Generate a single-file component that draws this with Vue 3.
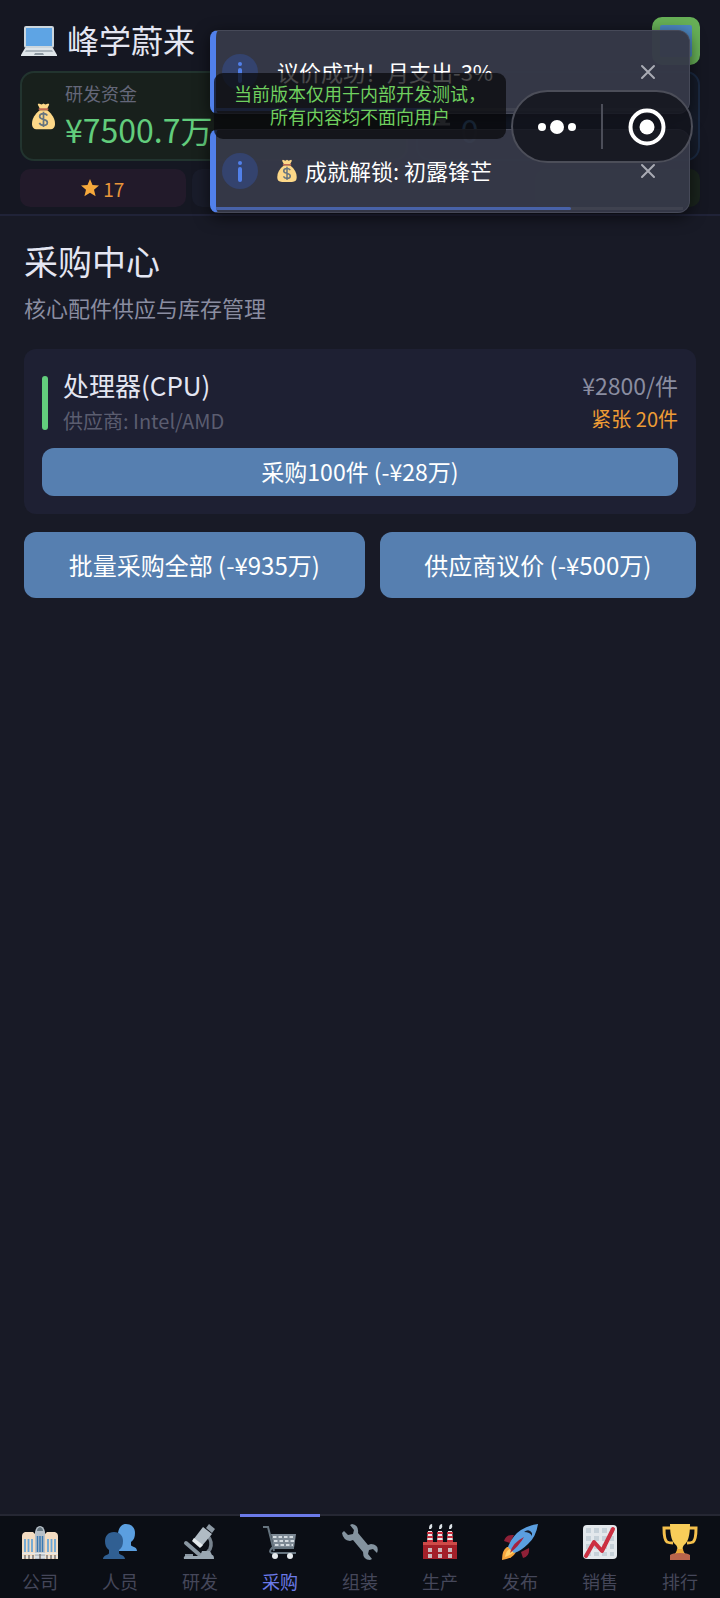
<template>
  <div class="game">
    <header class="header">
      <div class="brand">
        <svg class="brand-icon" viewBox="0 0 36 36" aria-hidden="true">
          <rect x="3" y="3" width="30" height="22" rx="2" fill="#ccd6dd" />
          <rect x="5" y="5" width="26" height="18" fill="#5ea4e4" />
          <path d="M4 25h28l4 7v1H0v-1z" fill="#dfe5e9" />
          <path d="M5 27h26l1 2H4z" fill="#aab4bc" />
          <path d="M14 30h8l1 2H13z" fill="#8b969f" />
        </svg>
        <span class="brand-name">峰学蔚来</span>
        <button class="avatar" type="button"></button>
      </div>

      <div class="resources">
        <div class="resource money">
          <svg class="resource-icon" viewBox="0 0 24 28" aria-hidden="true">
            <use href="#money-bag" />
          </svg>
          <div>
            <div class="resource-label">研发资金</div>
            <div class="resource-value">¥7500.7万</div>
          </div>
        </div>
        <div class="resource stock">
          <svg class="resource-icon" viewBox="0 0 24 28" aria-hidden="true">
            <path d="M13 4l7 3-5 7q5 3 3 7h5v3H1v-3h12l-6-5z" fill="#7e858c" />
          </svg>
          <div>
            <div class="resource-label"></div>
            <div class="resource-value">0</div>
          </div>
        </div>
      </div>

      <div class="chips">
        <div class="chip fame">
          <svg class="star" viewBox="0 0 18 18" aria-hidden="true">
            <path d="M9 0l2.500 6 6.500.500-5 4.300 1.600 6.500L9 13.800l-5.600 3.500L5 10.800 0 6.500 6.500 6z" fill="#f6a93b" />
          </svg>
          <span>17</span>
        </div>
        <div class="chip"></div>
        <div class="chip"></div>
        <div class="chip market"></div>
      </div>
    </header>

    <main class="content">
      <h1>采购中心</h1>
      <p class="subtitle">核心配件供应与库存管理</p>

      <section class="card">
        <div class="part">
          <span class="status"></span>
          <div class="part-info">
            <h2>处理器(CPU)</h2>
            <p>供应商: Intel/AMD</p>
          </div>
          <div class="part-price">
            <div class="price">¥2800/件</div>
            <div class="left">紧张 20件</div>
          </div>
        </div>
        <button class="btn buy" type="button">采购100件 (-¥28万)</button>
      </section>

      <div class="actions">
        <button class="btn" type="button">批量采购全部 (-¥935万)</button>
        <button class="btn" type="button">供应商议价 (-¥500万)</button>
      </div>
    </main>

    <nav class="tabs">
      <a
        v-for="tab in tabs"
        :key="tab.name"
        href="#"
        class="tab"
        :class="{ active: tab.name === current }"
        @click.prevent="current = tab.name"
      >
        <svg viewBox="0 0 36 36" aria-hidden="true" v-html="tab.icon"></svg>
        <span>{{ tab.name }}</span>
      </a>
    </nav>

    <div class="toasts">
      <div v-for="toast in toasts" :key="toast.text" class="toast">
        <svg class="info" viewBox="0 0 36 36" aria-hidden="true">
          <circle cx="18" cy="18" r="18" fill="#34436e" />
          <circle cx="18" cy="10" r="2" fill="#5180ea" />
          <path d="M18 16v11" stroke="#5180ea" stroke-width="4" stroke-linecap="round" />
        </svg>
        <div class="toast-text">
          <svg v-if="toast.bag" class="toast-bag" viewBox="0 0 24 28" aria-hidden="true">
            <use href="#money-bag" />
          </svg>
          <span>{{ toast.text }}</span>
        </div>
        <button class="close" type="button" aria-label="关闭" @click="dismiss(toast)">
          <svg viewBox="0 0 16 16" aria-hidden="true">
            <path d="M2 2l12 12M14 2L2 14" stroke="#a9abb4" stroke-width="2" stroke-linecap="round" />
          </svg>
        </button>
        <div class="track">
          <div class="progress" :style="{ width: toast.progress + '%' }"></div>
        </div>
      </div>
    </div>

    <div class="notice">当前版本仅用于内部开发测试，<br>所有内容均不面向用户</div>

    <div class="capsule">
      <button type="button" aria-label="更多">
        <svg width="40" height="40" viewBox="0 0 40 40" fill="#fff" aria-hidden="true">
          <circle cx="5" cy="20" r="4" />
          <circle cx="20" cy="20" r="7" />
          <circle cx="35" cy="20" r="4" />
        </svg>
      </button>
      <span class="divider"></span>
      <button type="button" aria-label="退出">
        <svg width="40" height="40" viewBox="0 0 40 40" aria-hidden="true">
          <circle cx="20" cy="20" r="16.500" fill="none" stroke="#fff" stroke-width="4" />
          <circle cx="20" cy="20" r="7.500" fill="#fff" />
        </svg>
      </button>
    </div>

    <svg class="defs" aria-hidden="true">
      <symbol id="money-bag" viewBox="0 0 24 28">
        <path d="M7 1l3 1 2-1 2 1 3-1 1 1-3 6H9L6 2z" fill="#fdd888" />
        <path d="M8 8c-5 4-8 9-8 14 0 4 2 6 6 6h12c4 0 6-2 6-6 0-5-3-10-8-14z" fill="#fdd888" />
        <path d="M7 6h10v2H7z" fill="#bf6952" />
        <path d="M16 13.500c-1-1.500-2.500-2-4-2-2 0-4 1-4 3s2 2.500 4 3 4 1.200 4 3.200-2 3-4 3-3.500-.700-4.300-2.500M12 9.500v16" fill="none" stroke="#67757f" stroke-width="1.800" />
      </symbol>
    </svg>
  </div>
</template>

<script setup>
import { ref } from 'vue';

const current = ref('采购');

const toasts = ref([
  { text: '议价成功！月支出-3%', progress: 46 },
  { text: '成就解锁: 初露锋芒', progress: 76, bag: true }
]);

function dismiss(toast) {
  toasts.value = toasts.value.filter(x => x !== toast);
}

const tabs = [
  {
    name: '公司',
    icon: `
      <path d="M0 12q0-3 3-4l8 0 2 2h10l2-2h8q3 1 3 4v23H0z" fill="#f3dcc2"/>
      <path d="M13 35V8q1-6 5-6t5 6v27z" fill="#b7c0c9"/>
      <path d="M15 7q0-3 3-4 3 1 3 4z" fill="#66757f"/>
      <path d="M3 15v13M6.500 15v13M10 15v13M26 15v13M29.500 15v13M33 15v13" stroke="#6ba6d6" stroke-width="1.800"/>
      <path d="M15.500 12v16M18 12v16M20.500 12v16" stroke="#3b78b0" stroke-width="1.500"/>
      <path d="M0 29.500h36M0 33h36" stroke="#e4e8ea" stroke-width="1.500"/>
      <path d="M3 31v4M7 31v4M11 31v4M18 30v5M25 31v4M29 31v4M33 31v4" stroke="#7d7672" stroke-width="1.500"/>`
  },
  {
    name: '人员',
    icon: `
      <path d="M24 0c6 0 9 4 9 9 0 4-1 7-4 9v3c0 2 6 1 6 6H17l-1-18c1-6 4-9 8-9z" fill="#5b9fe0"/>
      <path d="M12 8c6 0 9 4 9 9 0 4-1 7-4 9v3c0 2 6 2 6 6H1c0-4 6-4 6-6v-3c-3-2-4-5-4-9 0-5 3-9 9-9z" fill="#305f92"/>`
  },
  {
    name: '研发',
    icon: `
      <path d="M26 12q5 6 2 13l-4 5" fill="none" stroke="#77828d" stroke-width="3.500"/>
      <path d="M4 19l15 13" stroke="#8a97a2" stroke-width="4" stroke-linecap="round"/>
      <path d="M3 30h8v3H3z" fill="#8a97a2"/>
      <path d="M20 27h8l2 4q2 0 2 4H2q-1-3 2-3h14z" fill="#9aa7b2"/>
      <path d="M21 3l9 7-11 13-8-7z" fill="#b0bbc4"/>
      <path d="M12 14l9 7-3 3-8-7z" fill="#e5eaed"/>
      <path d="M27 0l6 5-3 4-6-5z" fill="#8d99a4"/>`
  },
  {
    name: '采购',
    icon: `
      <path d="M1 3h5l6 24" fill="none" stroke="#66747f" stroke-width="2"/>
      <path d="M9 10h25l-2 14H12z" fill="#7d8994"/>
      <path d="M11 13h21M12 17h20M13 21h18" stroke="#d5dce1" stroke-width="2" stroke-dasharray="3.500 2"/>
      <path d="M32 24H10q-4 4 0 5h24" fill="none" stroke="#66747f" stroke-width="2"/>
      <circle cx="13" cy="32" r="3" fill="#e6eaed"/>
      <circle cx="28" cy="32" r="3" fill="#e6eaed"/>`
  },
  {
    name: '组装',
    icon: `
      <path d="M10 0l-2 1 4 5-1 4-5 1-4-4-2 2q1 7 8 8l3-1 10 12q0 8 7 8l2-1-4-5 1-4 4-1 4 4q3-8-6-9l-3 1L16 9q1-8-6-9z" fill="#84939f"/>`
  },
  {
    name: '生产',
    icon: `
      <path d="M5 18L6 7h4l1 11zM15 18l1-11h4l1 11zM25 18l1-11h4l1 11z" fill="#f1e5e6"/>
      <path d="M5 9h6M5 13h6M5 17h6M15 9h6M15 13h6M15 17h6M25 9h6M25 13h6M25 17h6" stroke="#c62f3d" stroke-width="2"/>
      <path d="M7 5q0-5 3-5 1 3-1 5zM17 5q0-5 3-5 1 3-1 5zM27 5q0-5 3-5 1 3-1 5z" fill="#dce2e6"/>
      <path d="M1 18h34v17H1z" fill="#a32029"/>
      <path d="M1 18h34v3H1z" fill="#ce4b48"/>
      <path d="M6 24h4v4H6zM16 24h4v4h-4zM26 24h4v4h-4zM6 30h4v4H6zM16 30h4v4h-4zM26 30h4v4h-4z" fill="#cbb9bc"/>`
  },
  {
    name: '发布',
    icon: `
      <path d="M2 17q2-7 10-6l-4 8zM19 28l8-4q1 8-6 10z" fill="#8f2037"/>
      <path d="M0 36q0-10 5-13h6l3 4q-1 7-14 9z" fill="#f5a53c"/>
      <path d="M3 33q1-7 5-8l4 3q-3 3-9 5z" fill="#ffd06b"/>
      <path d="M36 0q-2 13-10 20-7 7-14 9l-6-6q3-8 9-14Q23 2 36 0z" fill="#5b9fe0"/>
      <path d="M22 8q5-4 8 1v3q-2-4-8-4z" fill="#171c27"/>
      <path d="M22 13q-5 9-14 16 2-10 14-16z" fill="#a5223f"/>`
  },
  {
    name: '销售',
    icon: `
      <rect x="1" y="1" width="34" height="34" rx="4" fill="#e3e8ec"/>
      <path d="M4 4h5v5H4zM12 4h5v5h-5zM20 4h5v5h-5zM28 4h4v5h-4zM4 12h5v5H4zM12 12h5v5h-5zM20 12h5v5h-5zM28 12h4v5h-4zM4 20h5v5H4zM12 20h5v5h-5zM20 20h5v5h-5zM28 20h4v5h-4zM4 28h5v4H4zM12 28h5v4h-5zM20 28h5v4h-5zM28 28h4v4h-4z" fill="#c6d1d9"/>
      <path d="M4 32l8-14 8 9L31 5" fill="none" stroke="#cc3042" stroke-width="4" stroke-linecap="round" stroke-linejoin="round"/>`
  },
  {
    name: '排行',
    icon: `
      <path d="M9 4H2q0 12 3 14 2 1 6 1M27 4h7q0 12-3 14-2 1-6 1" fill="none" stroke="#f5c04c" stroke-width="3"/>
      <path d="M8 0h20q0 17-6 21-2 2-1 6l3 4H12l3-4q1-4-1-6Q8 17 8 0z" fill="#f8cd59"/>
      <path d="M15 25h6l1 5h-8z" fill="#eda836"/>
      <path d="M8 31q2-2 10-2t10 2v5H8z" fill="#b9654c"/>`
  }
];
</script>

<style>
body {
  margin: 0;
  background: #181a26;
}
</style>

<style scoped>
.game {
  position: relative;
  display: flex;
  flex-direction: column;
  min-height: 100vh;
  color: #e4e6f2;
  font-family: "Noto Sans CJK SC", sans-serif;
}
.game * {
  box-sizing: border-box;
}
button {
  padding: 0;
  border: 0;
  background: none;
  color: inherit;
  font-family: inherit;
  cursor: pointer;
}
h1,
h2,
p {
  margin: 0;
  font-weight: normal;
}
svg {
  display: block;
  flex: none;
}
.defs {
  position: absolute;
  width: 0;
  height: 0;
}

.header {
  padding: 17px 20px 7px;
  background: #151722;
  border-bottom: 2px solid #202338;
}
.brand {
  display: flex;
  align-items: center;
  gap: 10px;
  height: 48px;
}
.brand-icon {
  width: 36px;
  height: 36px;
  margin-left: 1px;
}
.brand-name {
  flex: 1;
  padding-bottom: 3px;
  font-size: 32px;
  line-height: 45px;
}
.avatar {
  width: 48px;
  height: 48px;
  border: 8px solid #67b057;
  border-radius: 10px;
  background: #4c87c2;
}
.resources {
  display: flex;
  gap: 8px;
  margin-top: 6px;
}
.resource {
  display: flex;
  flex: 1 1 auto;
  align-items: center;
  gap: 10px;
  height: 90px;
  padding: 0 10px;
  border: 2px solid #22342f;
  border-radius: 14px;
  background: #18201c;
}
.resource.stock {
  border-color: #1b2a42;
  background: #151b29;
}
.resource-icon {
  width: 23px;
  height: 28px;
}
.resource-label {
  height: 26px;
  color: #646779;
  font-size: 18px;
  line-height: 26px;
}
.resource-value {
  height: 46px;
  color: #62cd7c;
  font-size: 32px;
  line-height: 46px;
}
.stock .resource-value {
  min-width: 44px;
  color: #4a86c4;
}
.chips {
  display: flex;
  gap: 6px;
  margin-top: 8px;
}
.chip {
  display: flex;
  flex: 1;
  align-items: center;
  justify-content: center;
  gap: 4px;
  height: 38px;
  border-radius: 10px;
  background: #191c2a;
  font-size: 19px;
}
.chip.fame {
  background: #221a2a;
  color: #e9963a;
}
.chip.market {
  background: #1a241d;
}
.star {
  width: 18px;
  height: 18px;
}

.content {
  flex: 1;
  padding: 20px 24px 24px;
}
h1 {
  font-size: 34px;
  line-height: 50px;
}
.subtitle {
  margin-top: 5px;
  color: #8a8da0;
  font-size: 22px;
  line-height: 32px;
}
.card {
  margin-top: 26px;
  padding: 18px;
  border-radius: 12px;
  background: #1e2033;
}
.part {
  display: flex;
  align-items: center;
  gap: 15px;
}
.status {
  width: 6px;
  height: 54px;
  border-radius: 3px;
  background: #62cd7c;
}
.part-info {
  flex: 1;
}
h2 {
  font-size: 26px;
  line-height: 36px;
}
.part-info p {
  color: #5b5d70;
  font-size: 20px;
  line-height: 36px;
}
.part-price {
  text-align: right;
}
.price {
  color: #8a8da0;
  font-size: 23px;
  line-height: 32px;
}
.left {
  color: #ee9c35;
  font-size: 20px;
  line-height: 36px;
}
.btn {
  padding-bottom: 2px;
  border-radius: 12px;
  background: #567fb0;
  color: #fff;
  font-size: 24px;
}
.buy {
  width: 100%;
  height: 48px;
  margin-top: 9px;
  font-size: 23px;
}
.actions {
  display: flex;
  gap: 15px;
  margin-top: 18px;
}
.actions .btn {
  flex: 1 1 auto;
  height: 66px;
}

.tabs {
  display: flex;
  height: 84px;
  background: #0b0e15;
}
.tab {
  display: flex;
  flex: 1;
  flex-direction: column;
  align-items: center;
  gap: 8px;
  padding-top: 8px;
  border-top: 2px solid #252733;
  color: #45475a;
  font-size: 18px;
  line-height: 26px;
  text-decoration: none;
}
.tab svg {
  width: 36px;
  height: 36px;
}
.tab.active {
  padding-top: 7px;
  border-top: 3px solid #6b7ae8;
  color: #6b7ae8;
}

.toasts {
  position: absolute;
  top: 30px;
  right: 30px;
  display: flex;
  flex-direction: column;
  gap: 15px;
  width: calc(100% - 240px);
}
.toast {
  position: relative;
  display: flex;
  align-items: center;
  height: 84px;
  padding: 0 33px 0 6px;
  border: 1px solid #464958;
  border-left: 6px solid #5180ea;
  border-radius: 8px 12px 12px 8px;
  background: rgba(54, 57, 71, .97);
  box-shadow: 0 4px 16px rgba(0, 0, 0, .6);
  color: #fff;
  font-size: 22px;
}
.info {
  width: 36px;
  height: 36px;
}
.toast-text {
  display: flex;
  flex: 1;
  align-items: center;
  gap: 8px;
  margin-left: 19px;
  padding-bottom: 2px;
}
.toast-bag {
  width: 20px;
  height: 23px;
}
.close svg {
  width: 16px;
  height: 16px;
}
.track {
  position: absolute;
  right: 6px;
  bottom: 2px;
  left: 0;
  height: 3px;
  background: #3f424f;
}
.progress {
  height: 3px;
  border-radius: 0 2px 2px 0;
  background: #4862a8;
}
.notice {
  position: absolute;
  top: 73px;
  left: 50%;
  width: 292px;
  margin-left: -146px;
  padding: 9px 0 11px;
  border-radius: 9px;
  background: rgba(10, 10, 12, .74);
  color: #6fd05f;
  font-size: 18px;
  line-height: 23px;
  text-align: center;
  white-space: nowrap;
}
.capsule {
  position: absolute;
  top: 90px;
  right: 27px;
  display: flex;
  align-items: center;
  width: 182px;
  height: 73px;
  border: 2px solid #4c4e59;
  border-radius: 37px;
  background: rgba(18, 20, 28, .82);
}
.capsule button {
  display: flex;
  flex: 1;
  justify-content: center;
}
.divider {
  width: 2px;
  height: 45px;
  background: #4c4e59;
}
</style>
